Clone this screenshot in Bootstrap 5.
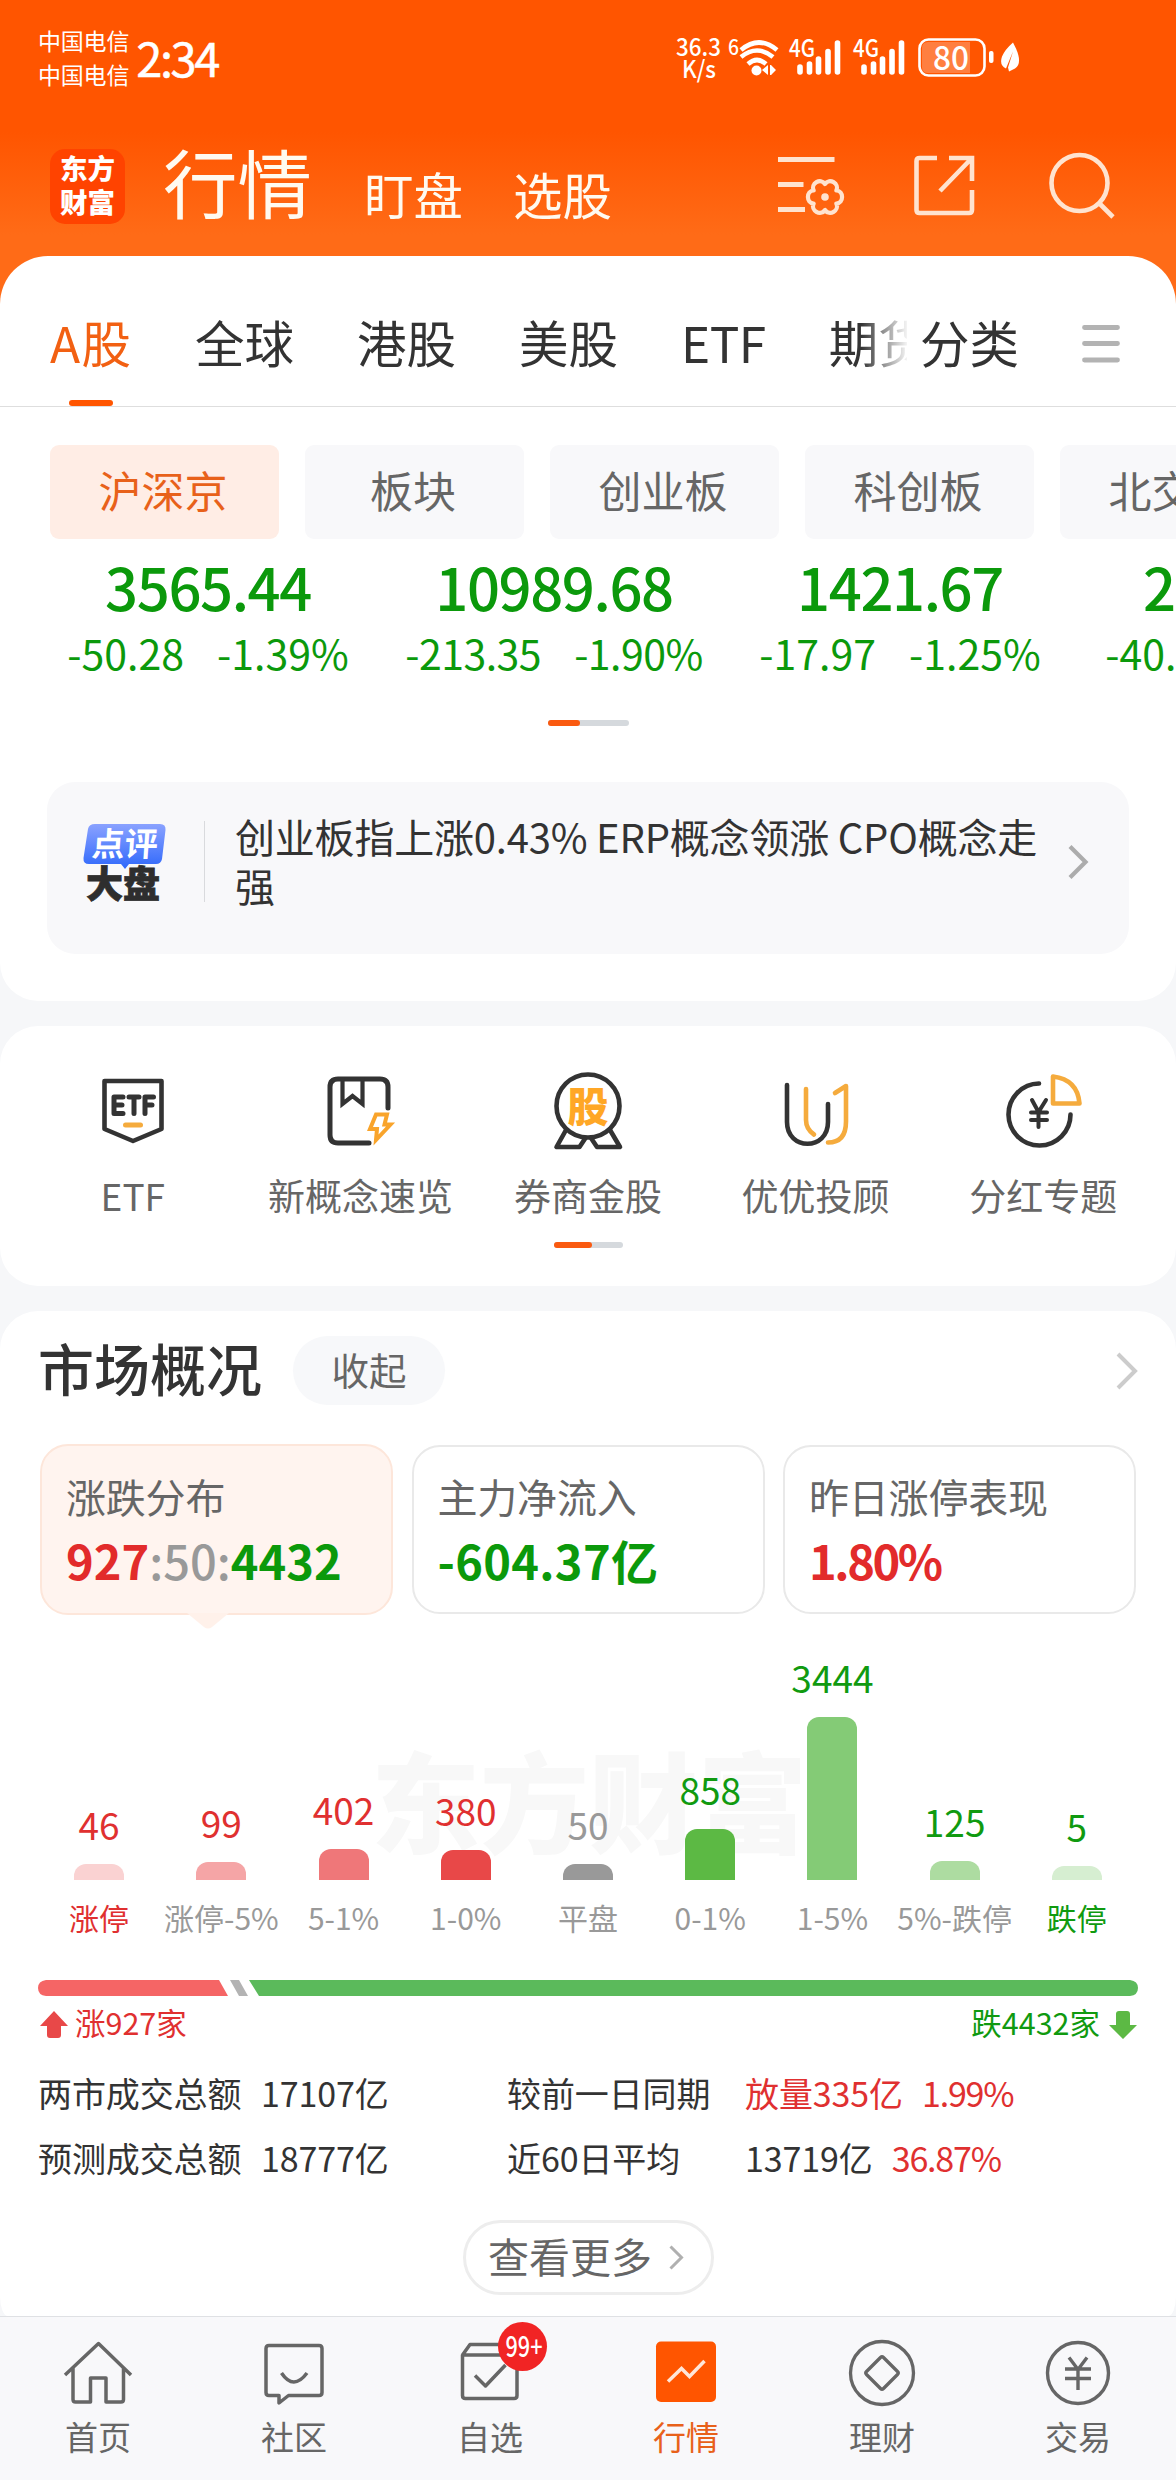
<!DOCTYPE html>
<html lang="zh-CN">
<head>
<meta charset="utf-8">
<meta name="viewport" content="width=device-width, initial-scale=1">
<title>行情</title>
<link href="https://cdn.jsdelivr.net/npm/bootstrap@5.3.0/dist/css/bootstrap.min.css" rel="stylesheet">
<style>
:root{--brand:#ff5500;--up:#e22b2b;--down:#0b990b;--ink:#333;--soft:#666}
body{font-family:"Noto Sans CJK SC","Noto Sans",sans-serif;color:var(--ink);width:1176px;height:2480px;overflow:hidden;line-height:1;
 background:linear-gradient(#ff5500 0,#ff5500 132px,#ff6b17 235px,#ff6b17 320px,#f6f7f9 320px)}
svg{display:block;flex:none;overflow:visible}
.nw{white-space:nowrap}
.statusbar{height:116px;padding:0 157px 0 38px;color:#fff}
.carrier{font-size:23px;line-height:34px;margin-right:7px;letter-spacing:-.2px;margin-top:-3px}
.clock{font-size:47px;letter-spacing:-2.4px;margin-top:-4px;-webkit-text-stroke:.5px #fff}
.toolbar{height:140px;padding:0 61px 0 50px;color:#fffaf0}
.applogo{width:75px;height:75px;border-radius:15px;background:#ff4300;color:#fff;font-weight:900;font-size:27.5px;line-height:34px;padding-bottom:5px}
.t-main{font-size:74.5px;margin:0 0 10px 38px}
.t-sub{font-size:49.5px;margin-top:16px}
.sheet{background:#fff;border-radius:48px 48px 38px 38px;height:745px}
.tabs{height:151px;padding:20px 56px 0 50px;border-bottom:1px solid #dedede;font-size:49.5px}
.tabstrip{width:857px;gap:63px;height:131px;padding-top:2px;position:relative;overflow:hidden}
.tabstrip::after{content:"";position:absolute;right:0;top:0;width:46px;height:129px;background:linear-gradient(90deg,rgba(255,255,255,0),rgba(255,255,255,.95))}
.tabstrip .active{color:#f26012;position:relative;width:82px;letter-spacing:1.5px}
.tabbar{position:absolute;width:44px;height:6px;border-radius:3px;background:var(--brand);left:19px;bottom:-39px}
.chips{padding:38px 0 0 50px;gap:26px;overflow:hidden}
.chip{flex:none;width:229px;height:94px;border-radius:9px;background:#f8f8fa;color:var(--soft);font-size:43px;padding:0 3px 5px 0}
.chip.on{background:#ffede5;color:#e8611a}
.quotes{padding:18px 0 0 35px;overflow:hidden;color:var(--down)}
.quote{flex:none;width:346px}
.quote .px{font-size:58px;font-weight:500;line-height:58px;letter-spacing:-1.4px}
.quote .chg{font-size:41px;line-height:41px;margin-top:17px;gap:33px}
.pager{height:6px;border-radius:3px;background:#d5d9dd;margin:0 auto}
.pager i{display:block;height:6px;border-radius:3px;background:#fa5a10}
.review{margin:56px 47px 0;height:172px;border-radius:28px;background:#f8f8fa}
.review p{flex:none;font-size:40px;line-height:48.5px;margin:30px 0 0 30px;width:806px;letter-spacing:-.2px;overflow-wrap:anywhere}
.panel{background:#fff;margin-top:25px}
.tools{height:260px;border-radius:38px;padding:44px 19px 0}
.tool{width:20%;font-size:37px;line-height:40px;color:var(--soft)}
.tool svg{margin-bottom:25px}
.market{height:1005px;border-radius:38px 38px 8px 8px/38px 38px 20px 20px;padding:25px 38px 0}
.pill{width:152px;height:69px;border-radius:35px;background:#f7f8fa;font-size:37.5px;color:var(--soft);padding-bottom:4px;margin-left:31px}
.stat{position:relative;width:353px;height:169px;border:2px solid #e9e9e9;border-radius:28px;padding:29px 24px 0;margin-top:1px}
.stat.on{background:#fff4ef;border-color:#fde6da;height:171px;margin-top:0;padding-top:30px}
.stat svg{position:absolute;left:145px;top:167px}
.stat small{display:block;font-size:40px;line-height:40px;color:var(--soft);letter-spacing:-.2px}
.stat b{display:block;font-size:47px;line-height:47px;margin-top:20px;font-weight:700}
.chart{position:relative;height:317px}
.wm{position:absolute;left:333px;top:128px;font-size:109px;font-weight:900;color:#f8f8f8}
.colm{width:11.111%;position:relative}
.colm .n{font-size:37px;line-height:37px;margin-bottom:21px}
.colm .bar{width:50px;border-radius:12px 12px 0 0}
.colm .k{font-size:30px;line-height:30px;margin-top:22px;color:#999}
.up{color:#e03030}.down{color:#109a10}.flat{color:#999}
.colm .k.up{color:#e03030}.colm .k.down{color:#109a10}
.sumrow{font-size:30.5px;line-height:34px;margin-top:9px}
.facts{font-size:34px;line-height:34px;letter-spacing:-.1px}
.facts .pct{letter-spacing:-1.2px}
.more{width:251px;height:75px;border:3px solid #ededed;border-radius:38px;font-size:41px;color:var(--soft);margin:45px auto 0}
.more span{margin-bottom:4px}
.dock{height:164px;background:#f8f8fa;border-top:1px solid #dfe1e4;padding-top:20px;font-size:33px;line-height:33px;color:var(--soft)}
.dock>div{width:16.6667%;position:relative}
.dock svg{margin-bottom:11px}
.bubble{position:absolute;left:106px;top:-15px;width:49px;height:49px;background:#f12424}
.bubble svg{margin:0}
</style>
<script src="https://cdn.jsdelivr.net/npm/bootstrap@5.3.0/dist/js/bootstrap.bundle.min.js"></script>
</head>
<body>
<header>
 <div class="statusbar d-flex align-items-center nw">
  <div class="carrier">中国电信<br>中国电信</div>
  <div class="clock">2:34</div>
  <svg class="ms-auto" width="343" height="44" viewBox="676 37 343 44" fill="#fff" font-family="Noto Sans CJK SC" font-weight="500">
   <text x="676" y="56.500" font-size="24" textLength="45" lengthAdjust="spacingAndGlyphs">36.3</text>
   <text x="682" y="79" font-size="24" textLength="34" lengthAdjust="spacingAndGlyphs">K/s</text>
   <text x="728" y="56" font-size="22" textLength="11" lengthAdjust="spacingAndGlyphs">6</text>
   <g fill="none" stroke="#fff" stroke-width="4.600"><path d="M741 51Q759 36 777 51M741 58Q757 45 773 58M748 65Q757 57 766 65"/></g>
   <circle cx="756.500" cy="71.500" r="5"/><path d="M762 71l6-5v10zM770 66l1.500 0v10h-1.500zM771 66l5 5-5 5z"/>
   <g id="sig"><text x="789" y="58" font-size="24" textLength="26" lengthAdjust="spacingAndGlyphs">4G</text>
   <g stroke="#fff" stroke-width="5.600" stroke-linecap="round"><path d="M800 68v5M809.500 65v8M818.500 60v13M828 52.500v20.500M837.500 44v29"/></g></g>
   <use href="#sig" x="64"/>
   <rect x="919.500" y="40.500" width="65" height="36" rx="9" fill="none" stroke="#fff" stroke-width="2.600"/>
   <path d="M928 43h42v31h-42q-6 0-6-6v-19q0-6 6-6z" fill="#fff" fill-opacity=".25"/>
   <rect x="989" y="52" width="4.500" height="12" rx="2"/>
   <text x="933" y="71" font-size="33" textLength="36" lengthAdjust="spacingAndGlyphs">80</text>
   <path d="M1013 43.500q11 20 2 26l-6 3-1-4 5-16-7 17q-7-3-4-12 3-7 11-14z"/>
  </svg>
 </div>
 <div class="toolbar d-flex align-items-center nw">
  <div class="applogo d-flex align-items-center justify-content-center"><span>东方<br>财富</span></div>
  <div class="t-main">行情</div>
  <div class="t-sub" style="margin-left:52px">盯盘</div>
  <div class="t-sub" style="margin-left:50px">选股</div>
  <div class="ms-auto d-flex align-items-center" style="margin-bottom:2px">
   <svg width="65" height="60" viewBox="0 0 65 60" fill="none" stroke="#ffe3cf" stroke-width="5"><path d="M0 4.500h56.500M0 29.500h25.500M0 54.500h27"/>
    <g transform="translate(47 42)" stroke-width="4.200" stroke-linejoin="round"><path d="M11.300-6.500C19-6.200 19 6.200 11.300 6.500C14.900 13.400 4.200 19.600 0 13C-4.200 19.600-14.900 13.400-11.300 6.500C-19 6.200-19-6.200-11.300-6.500C-14.900-13.400-4.200-19.600 0-13C4.200-19.600 14.900-13.400 11.300-6.500z"/><circle r="3.800" fill="#ffe3cf" stroke="none"/></g></svg>
   <svg style="margin-left:71px" width="61" height="61" viewBox="0 0 61 61" fill="none" stroke="#ffe3cf" stroke-width="4.600"><path d="M23 3H5.500Q2.500 3 2.500 6v49q0 3 3 3H55q3 0 3-3V35M35 3h23v23M57 4 26 36"/></svg>
   <svg style="margin-left:74px" width="66" height="67" viewBox="0 0 66 67" fill="none" stroke="#ffe3cf" stroke-width="4.600"><circle cx="30.500" cy="31" r="28"/><path d="M50 51l14 14"/></svg>
  </div>
 </div>
</header>

<section class="sheet">
 <nav class="tabs d-flex align-items-center nw">
  <div class="tabstrip d-flex align-items-center"><span class="active">A股<i class="tabbar"></i></span><span>全球</span><span>港股</span><span>美股</span><span style="letter-spacing:-.5px">ETF</span><span>期货</span></div>
  <span style="margin-left:13px;padding-top:2px">分类</span>
  <svg class="ms-auto" style="margin-top:3px" width="38" height="38" viewBox="0 0 38 38" stroke="#b3b3b3" stroke-width="4.800" stroke-linecap="round"><path d="M2.500 3.500h33M2.500 19.500h33M2.500 36h33"/></svg>
 </nav>
 <div class="chips d-flex nw">
  <div class="chip on d-flex align-items-center justify-content-center">沪深京</div>
  <div class="chip d-flex align-items-center justify-content-center" style="width:219px">板块</div>
  <div class="chip d-flex align-items-center justify-content-center">创业板</div>
  <div class="chip d-flex align-items-center justify-content-center">科创板</div>
  <div class="chip d-flex align-items-center justify-content-center">北交所</div>
 </div>
 <div class="quotes d-flex text-center nw">
  <div class="quote"><div class="px">3565.44</div><div class="chg d-flex justify-content-center"><span>-50.28</span><span>-1.39%</span></div></div>
  <div class="quote"><div class="px">10989.68</div><div class="chg d-flex justify-content-center" style="letter-spacing:-.5px"><span>-213.35</span><span>-1.90%</span></div></div>
  <div class="quote"><div class="px">1421.67</div><div class="chg d-flex justify-content-center"><span>-17.97</span><span>-1.25%</span></div></div>
  <div class="quote"><div class="px">2229.13</div><div class="chg d-flex justify-content-center"><span>-40.85</span><span>-1.80%</span></div></div>
 </div>
 <div class="pager" style="width:81px;margin-top:47px"><i style="width:32px"></i></div>
 <div class="review d-flex align-items-start">
  <svg style="margin:42px 0 0 36px" width="83" height="78" viewBox="0 0 83 78" font-family="Noto Sans CJK SC" font-weight="900">
   <defs><linearGradient id="bl" x2="0" y2="1"><stop stop-color="#8aa2ff"/><stop offset="1" stop-color="#2f68fb"/></linearGradient></defs>
   <path d="M12 0H77q6 0 5.500 6L79 35q-1 5-6 5H46l-4 5-4-5H6q-6 0-5.500-6L5 5q1-5 7-5z" fill="url(#bl)"/>
   <text transform="translate(8 32) skewX(-4)" font-size="33" font-weight="700" fill="#fff">点评</text>
   <text x="3" y="74" font-size="37" fill="#2e2e2e" stroke="#2e2e2e" stroke-width=".8">大盘</text></svg>
  <div style="width:1px;height:81px;background:#d9dadd;margin:39px 0 0 38px"></div>
  <p>创业板指上涨0.43% ERP概念领涨 CPO概念走强</p>
  <svg style="margin:63px 41px 0 auto" width="20" height="34" viewBox="0 0 20 34" fill="none" stroke="#acacac" stroke-width="4.200"><path d="M2 1.500 17.500 17 2 32.500"/></svg>
 </div>
</section>

<section class="panel tools">
 <div class="d-flex text-center nw">
  <div class="tool d-flex flex-column align-items-center"><svg width="80" height="80" viewBox="93 1070 80 80" fill="none" stroke="#333" stroke-width="4.600" stroke-linejoin="round"><path d="M104.500 1081h57v48L133 1141l-28.500-12z"/><g stroke-width="5" stroke-linecap="round"><path d="M123 1097h-9v16.500h9M114 1105h8M129 1097h10M134 1097v16.500M153.500 1097H145v16.500M145 1105h7"/><path d="M125.500 1125h15" stroke="#f5ab3d" stroke-width="5"/></g></svg>ETF</div>
  <div class="tool d-flex flex-column align-items-center"><svg width="80" height="80" viewBox="321 1070 80 80" fill="none" stroke="#333" stroke-width="5" stroke-linecap="round" stroke-linejoin="round"><path d="M389 1108v-21q0-8-8-8H339q-8 0-8 8v48q0 8 8 8h31"/><path d="M343.500 1079v25l10-8 10 8V1079" stroke-width="4.200" stroke-linejoin="miter"/><path d="M377 1114.500h11l-2.500 10h6L377 1140l1-11h-7z" stroke="#f9a42b" stroke-width="4" stroke-linejoin="miter"/></svg>新概念速览</div>
  <div class="tool d-flex flex-column align-items-center"><svg width="80" height="80" viewBox="548 1070 80 80" fill="none" stroke="#333" stroke-width="4.600" stroke-linejoin="round"><circle cx="588" cy="1106" r="31.500"/><path d="M566 1130l-9.500 17h23l6-9M610 1130l10 17H597l-6-9"/><text x="588" y="1122" text-anchor="middle" font-family="Noto Sans CJK SC" font-weight="900" font-size="41" fill="#ffa726" stroke="none">股</text></svg>券商金股</div>
  <div class="tool d-flex flex-column align-items-center"><svg width="80" height="80" viewBox="776 1070 80 80" fill="none" stroke="#333" stroke-width="4.600" stroke-linecap="round" stroke-linejoin="round"><path d="M787 1085v37c0 29 41 29 41 0v-18"/><path d="M806 1089v31q0 9 8 14.500M828 1142.500q18 0 18-21V1086l-11 7" stroke="#f5ab3d"/></svg>优优投顾</div>
  <div class="tool d-flex flex-column align-items-center"><svg width="80" height="80" viewBox="1003 1070 80 80" fill="none" stroke="#333" stroke-width="4.600" stroke-linecap="round" stroke-linejoin="round"><path d="M1039 1083.500a31 31 0 1 0 31.500 31"/><path d="M1032 1100l6.500 12 7.500-12M1038.500 1112v15M1031 1112.500h16M1031 1120h16" stroke-width="4"/><path d="M1053 1076.500v27h26.500q-2-24-26.500-27z" stroke="#f5ab3d"/></svg>分红专题</div>
 </div>
 <div class="pager" style="width:69px;margin-top:27px"><i style="width:38px"></i></div>
</section>

<section class="panel market">
 <div class="d-flex align-items-center nw" style="height:69px">
  <div style="font-size:56px;font-weight:500;margin-bottom:7px">市场概况</div>
  <div class="pill d-flex align-items-center justify-content-center">收起</div>
  <svg class="ms-auto" width="22" height="38" viewBox="0 0 22 38" fill="none" stroke="#ccc" stroke-width="4"><path d="M2 2 19 19 2 36"/></svg>
 </div>
 <div class="d-flex justify-content-between nw" style="margin:39px 2px 0">
  <div class="stat on"><small>涨跌分布</small><b><span style="color:#e22b2b">927</span><span class="flat" style="font-weight:500">:50:</span><span style="color:#0b990b">4432</span></b><svg width="42" height="18" viewBox="0 0 42 18"><path d="M0 0 17 14q4 3 8 0L42 0z" fill="#fff1ea"/></svg></div>
  <div class="stat"><small>主力净流入</small><b style="color:#0b990b;letter-spacing:.3px">-604.37亿</b></div>
  <div class="stat"><small>昨日涨停表现</small><b style="color:#e22b2b;letter-spacing:-2.4px">1.80%</b></div>
 </div>
 <div class="chart d-flex align-items-end nw">
  <div class="wm">东方财富</div>
  <div class="colm d-flex flex-column align-items-center"><span class="n up">46</span><div class="bar" style="height:16px;background:#fad2d2"></div><span class="k up">涨停</span></div>
  <div class="colm d-flex flex-column align-items-center"><span class="n up">99</span><div class="bar" style="height:18px;background:#f5a5a6"></div><span class="k">涨停-5%</span></div>
  <div class="colm d-flex flex-column align-items-center"><span class="n up">402</span><div class="bar" style="height:31px;background:#ef7779"></div><span class="k">5-1%</span></div>
  <div class="colm d-flex flex-column align-items-center"><span class="n up">380</span><div class="bar" style="height:30px;background:#e84848"></div><span class="k">1-0%</span></div>
  <div class="colm d-flex flex-column align-items-center"><span class="n flat">50</span><div class="bar" style="height:16px;background:#999"></div><span class="k">平盘</span></div>
  <div class="colm d-flex flex-column align-items-center"><span class="n down">858</span><div class="bar" style="height:51px;background:#5cb944"></div><span class="k">0-1%</span></div>
  <div class="colm d-flex flex-column align-items-center"><span class="n down">3444</span><div class="bar" style="height:163px;background:#84cb76"></div><span class="k">1-5%</span></div>
  <div class="colm d-flex flex-column align-items-center"><span class="n down">125</span><div class="bar" style="height:19px;background:#addca1"></div><span class="k">5%-跌停</span></div>
  <div class="colm d-flex flex-column align-items-center"><span class="n down">5</span><div class="bar" style="height:14px;background:#d6eed1"></div><span class="k down">跌停</span></div>
 </div>
 <svg style="margin-top:48px" width="1100" height="16" viewBox="0 0 1100 16"><path d="M8 0H181l9 16H8Q0 15 0 8 0 1 8 0z" fill="#f56565"/><path d="M192 0h9l9 16h-9z" fill="#b3b3b3"/><path d="M211 0h881q8 1 8 8t-8 8H221z" fill="#5bba5b"/></svg>
 <div class="sumrow d-flex justify-content-between nw">
  <div class="d-flex up"><svg width="28" height="28" viewBox="0 0 28 28" style="margin:6px 7px 0 2px"><path d="M14 0 28 15H21v9q0 3-3 3h-8q-3 0-3-3v-9H0z" fill="#e84848"/></svg>涨927家</div>
  <div class="d-flex down">跌4432家<svg width="28" height="28" viewBox="0 0 28 28" style="margin:6px 1px 0 9px"><path d="M14 28 0 14H7V3q0-3 3-3h8q3 0 3 3v11h7z" fill="#5cb944"/></svg></div>
 </div>
 <div class="facts nw" style="margin-top:37px">
  <div class="d-flex"><span style="width:223px">两市成交总额</span><span style="width:246px">17107亿</span><span style="width:238px">较前一日同期</span><span class="up">放量335亿</span><span class="up pct" style="margin-left:19px">1.99%</span></div>
  <div class="d-flex" style="margin-top:31px"><span style="width:223px">预测成交总额</span><span style="width:246px">18777亿</span><span style="width:238px">近60日平均</span><span>13719亿</span><span class="up pct" style="margin-left:19px">36.87%</span></div>
 </div>
 <div class="more d-flex align-items-center justify-content-center nw"><span>查看更多</span><svg style="margin:0 4px 0 17px" width="15" height="25" viewBox="0 0 15 25" fill="none" stroke="#b0b0b0" stroke-width="3"><path d="M1.500 1.500 12.500 12.500 1.500 23.500"/></svg></div>
</section>

<nav class="dock d-flex text-center nw">
 <div class="d-flex flex-column align-items-center"><svg width="72" height="72" viewBox="62 2337 72 72" fill="none" stroke="#666" stroke-width="3.500" stroke-linejoin="round"><path d="M65 2375l33.500-31.500 32.500 31.500M73 2368v31.500q0 2.500 2.500 2.500H90.500v-24h15.500v24h15q2.500 0 2.500-2.500V2368"/></svg>首页</div>
 <div class="d-flex flex-column align-items-center"><svg width="72" height="72" viewBox="258 2337 72 72" fill="none" stroke="#666" stroke-width="3.500" stroke-linejoin="round"><path d="M269 2345.500h50q3 0 3 3v44q0 3-3 3H288.500l-9.500 7.500v-7.500H269q-3 0-3-3v-44q0-3 3-3z"/><path d="M281.500 2373q12 18 25.500 0"/></svg>社区</div>
 <div class="d-flex flex-column align-items-center"><svg width="72" height="72" viewBox="454 2337 72 72" fill="none" stroke="#666" stroke-width="3.500" stroke-linejoin="round"><path d="M462.500 2355l7.500-10.500h42l5 10.500M462.500 2355h54.500v40.500q0 3-3 3H465.500q-3 0-3-3z"/><path d="M475 2375.500l10.500 10.500 20-21"/></svg>自选<span class="bubble rounded-circle"><svg width="49" height="49" viewBox="0 0 49 49" fill="#fff" font-size="28" font-weight="500"><text x="7.500" y="34.500" textLength="37" lengthAdjust="spacingAndGlyphs">99+</text></svg></span></div>
 <div class="d-flex flex-column align-items-center" style="color:#e8611a"><svg width="72" height="72" viewBox="650 2337 72 72" fill="none"><rect x="656" y="2341.500" width="60" height="60.500" rx="5" fill="#ff5500"/><path d="M668 2381.500l13.500-13 8 8L704.500 2361" stroke="#ffe6d8" stroke-width="3.500"/></svg>行情</div>
 <div class="d-flex flex-column align-items-center"><svg width="72" height="72" viewBox="846 2337 72 72" fill="none" stroke="#666" stroke-width="3.300" stroke-linejoin="round"><circle cx="882" cy="2373" r="31.500"/><path d="M880.500 2357.500q1.500-1.500 3 0l14 14q1.500 1.500 0 3l-14 14q-1.500 1.500-3 0l-14-14q-1.500-1.500 0-3z"/></svg>理财</div>
 <div class="d-flex flex-column align-items-center"><svg width="72" height="72" viewBox="1042 2337 72 72" fill="none" stroke="#666" stroke-width="3.400"><circle cx="1078" cy="2373" r="30.500"/><path d="M1069 2357.500l9 12 9-12M1078 2369v21M1065 2369h26M1065 2378.500h26"/></svg>交易</div>
</nav>
</body>
</html>
